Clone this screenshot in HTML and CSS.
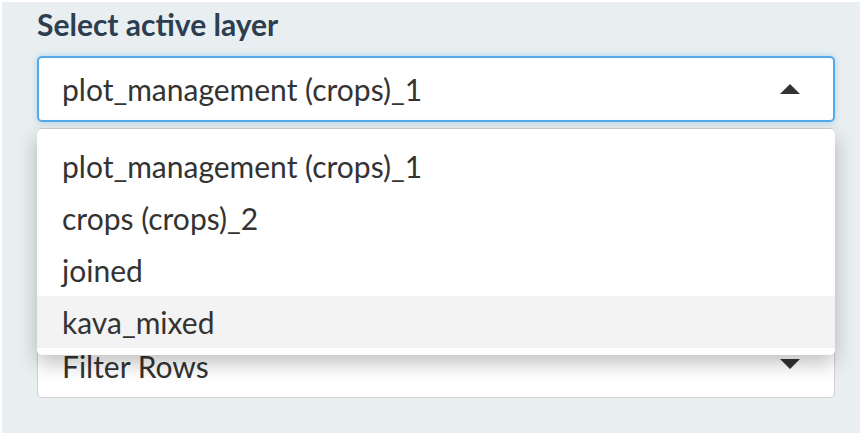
FILE: index.html
```html
<!DOCTYPE html>
<html>
<head>
<meta charset="utf-8">
<link rel="stylesheet" href="styles.css">
</head>
<body>
<div class="well">
  <div class="label">Select active layer</div>
  <div class="field">
    <div class="select focus">
      <span class="value">plot_management (crops)_1</span>
      <span class="caret up"></span>
    </div>
    <div class="dropdown">
      <div class="option">plot_management (crops)_1</div>
      <div class="option">crops (crops)_2</div>
      <div class="option">joined</div>
      <div class="option active">kava_mixed</div>
    </div>
  </div>
  <div class="select second">
    <span class="value">Filter Rows</span>
    <span class="caret down"></span>
  </div>
</div>
</body>
</html>
```

FILE: styles.css
```css
html, body {
  margin: 0;
  padding: 0;
  background: #ffffff;
}
body {
  font-family: Lato, "Open Sans", sans-serif;
  color: #333333;
}
.well {
  margin: 2px 5px 0 2px;
  height: 431px;
  background: #e9eff0;
  padding: 4px 25px 0 35px;
  box-sizing: border-box;
}
.label {
  font-weight: bold;
  font-size: 30px;
  line-height: 36px;
  color: #2c3e50;
  margin-bottom: 14px;
}
.field {
  position: relative;
}
.select {
  display: flex;
  align-items: center;
  justify-content: space-between;
  background: #fff;
  border-radius: 5px;
  box-sizing: border-box;
  font-size: 30px;
  padding: 0 33px 0 23px;
}
.select.focus {
  height: 66px;
  border: 2px solid #56aaea;
  box-shadow: 0 0 6px rgba(86, 170, 234, 0.45);
}
.select.second {
  margin-top: 6px;
  height: 270px;
  border: 1px solid #cfcfcf;
  align-items: flex-end;
  padding: 0 34px 13px 24px;
}
.select.second .caret {
  margin-bottom: 15px;
}
.caret {
  width: 0;
  height: 0;
  border-left: 10px solid transparent;
  border-right: 10px solid transparent;
}
.caret.up {
  border-bottom: 10px solid #333;
}
.caret.down {
  border-top: 10px solid #333;
}
.dropdown {
  position: absolute;
  left: 0;
  right: 0;
  top: 73px;
  z-index: 5;
  background: #fff;
  border-radius: 5px;
  box-shadow: 0 8px 20px rgba(0, 0, 0, 0.25);
  padding: 11px 0 7px;
}
.option {
  font-size: 30px;
  line-height: 52px;
  padding-left: 25px;
}
.option.active {
  background: #f3f3f3;
}
```
